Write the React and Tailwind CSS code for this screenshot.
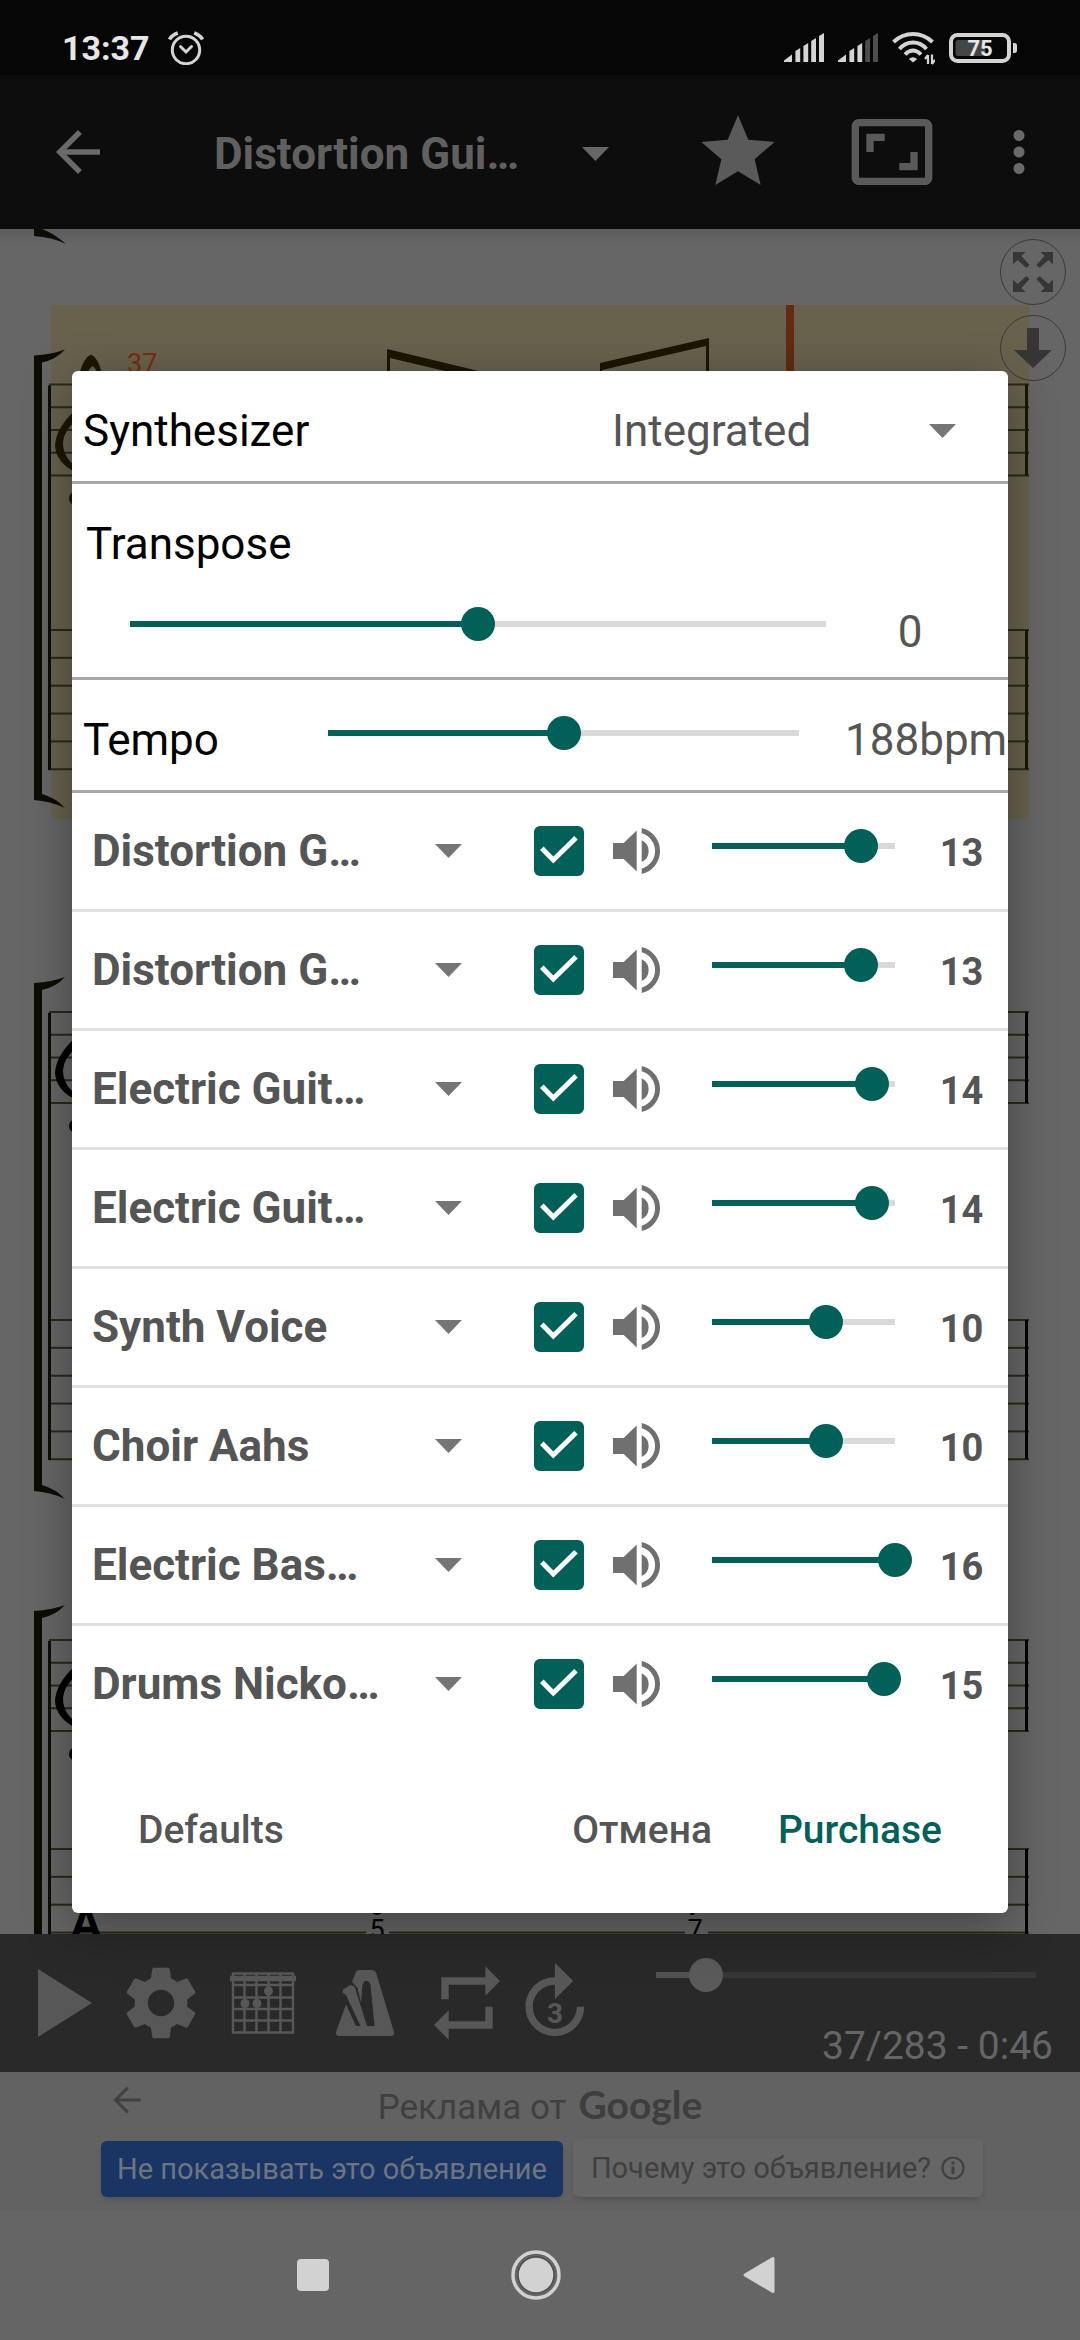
import { useState } from "react";
import { MdArrowBack, MdAspectRatio, MdMoreVert, MdRepeat, MdSettings, MdStar } from "react-icons/md";

const TRACKS = [
  { name: "Distortion G…", volume: 13 },
  { name: "Distortion G…", volume: 13 },
  { name: "Electric Guit…", volume: 14 },
  { name: "Electric Guit…", volume: 14 },
  { name: "Synth Voice", volume: 10 },
  { name: "Choir Aahs", volume: 10 },
  { name: "Electric Bas…", volume: 16 },
  { name: "Drums Nicko…", volume: 15 },
];

function Slider({ label, min = 0, max, value, onChange, dark = false }) {
  const percent = ((value - min) / (max - min)) * 100;
  return (
    <div className="relative flex h-[34px] items-center">
      <div className={`h-1.5 w-full ${dark ? "bg-[#373737]" : "bg-[#d9d9d9]"}`}>
        <div className={`h-full ${dark ? "bg-[#515151]" : "bg-[#016057]"}`} style={{ width: `${percent}%` }} />
      </div>
      <input
        type="range"
        aria-label={label}
        min={min}
        max={max}
        value={value}
        onChange={(e) => onChange(Number(e.target.value))}
        className={`absolute -inset-x-[17px] inset-y-0 m-0 h-[34px] appearance-none bg-transparent [&::-webkit-slider-thumb]:h-[34px] [&::-webkit-slider-thumb]:w-[34px] [&::-webkit-slider-thumb]:appearance-none [&::-webkit-slider-thumb]:rounded-full ${
          dark ? "[&::-webkit-slider-thumb]:bg-[#5a5a5a]" : "[&::-webkit-slider-thumb]:bg-[#016057]"
        }`}
      />
    </div>
  );
}

function Dropdown({ id, label, value, className = "", caret = "text-[#757575]" }) {
  return (
    <div className="grid w-full items-center">
      <select
        id={id}
        aria-label={label}
        defaultValue={value}
        className={`w-full appearance-none bg-transparent text-[44px] leading-[52px] outline-none [grid-area:1/1] ${className}`}
      >
        <option className="text-black">{value}</option>
      </select>
      <svg
        viewBox="0 0 27 14"
        className={`pointer-events-none h-3.5 w-[27px] justify-self-end [grid-area:1/1] ${caret}`}
        fill="currentColor"
        aria-hidden="true"
      >
        <path d="M0 0h27L13.5 14z" />
      </svg>
    </div>
  );
}

function AlarmIcon() {
  return (
    <svg viewBox="0 0 36 34" className="h-[34px] w-9" fill="none" stroke="#d4d4d4" strokeWidth="3" aria-hidden="true">
      <circle cx="18" cy="19" r="13.7" />
      <path d="M1.5 8.5Q4 4 9.8 2M34.5 8.5Q32 4 26.2 2" strokeWidth="3.6" />
      <path d="M12.5 15.5 18 21l5.5-5.5" strokeLinecap="round" />
    </svg>
  );
}

function SignalIcon({ dim = 0 }) {
  const bars = ["M0 27.5 8 21.5V29H0z", "M11.4 18l4.8-3v14h-4.8z", "M19.4 13l4.8-3v19h-4.8z", "M27.2 8 32 5v24h-4.8z", "M35 3l5-3v29h-5z"];
  return (
    <svg viewBox="0 0 40 30" className="h-[30px] w-10" aria-hidden="true">
      {bars.map((d, i) => (
        <path key={d} d={d} fill={i >= bars.length - dim ? "#4d4d4d" : "#d4d4d4"} />
      ))}
    </svg>
  );
}

function WifiIcon() {
  return (
    <svg viewBox="0 0 43 34" className="h-[34px] w-[43px]" fill="none" stroke="#d4d4d4" strokeWidth="3.8" aria-hidden="true">
      <path d="M1.5 11Q10 3 21 3t19.5 8" />
      <path d="M7.5 18Q13 11.5 21 11.5T34.5 18" />
      <path d="M13 23.5Q17 19.5 21 19.5t8 4" />
      <path d="M16.8 28Q21 24.5 25.2 28L21 31.5z" fill="#d4d4d4" stroke="none" />
      <path d="M36 33V24m0 0-3 4M40 23.5V33m0 0 3-4" strokeWidth="2.2" />
    </svg>
  );
}

function BatteryIcon() {
  return (
    <svg viewBox="0 0 68 30" className="h-[30px] w-[68px]" aria-hidden="true">
      <rect x="2" y="2" width="58" height="26" rx="6.5" fill="none" stroke="#d4d4d4" strokeWidth="4" />
      <rect x="6.5" y="7" width="30" height="16" rx="2.5" fill="#454545" />
      <path d="M64 10h1.5q2.5 0 2.5 3v4q0 3-2.5 3H64z" fill="#d4d4d4" />
      <text x="31" y="23" textAnchor="middle" fill="#e6e6e6" className="text-[22px] font-bold">
        75
      </text>
    </svg>
  );
}

function SpeakerIcon() {
  return (
    <svg viewBox="0 0 47 46" className="h-[46px] w-[47px]" fill="#707070" aria-hidden="true">
      <path d="M0 15h10.7L23.7 2.5v41L10.7 31H0z" />
      <path d="M28.7 12.3a12 12 0 0 1 0 21.7z" />
      <path d="M28.7 0a23.6 23.6 0 0 1 0 46v-5.3a18.4 18.4 0 0 0 0-35.4z" />
    </svg>
  );
}

function FretboardIcon() {
  return (
    <svg viewBox="0 0 66 62" className="h-[62px] w-[66px]" fill="none" stroke="currentColor" strokeWidth="2.4" aria-hidden="true">
      <path d="M3 1.5h60v59H3zM14.5 2v58M26.5 2v58M38.5 2v58M50.5 2v58M3 13h60M3 25.5h60M3 37h60M3 48.5h60" />
      <path d="M0 6.500h66" strokeWidth="5.5" />
      <g fill="currentColor" stroke="none">
        <circle cx="38.5" cy="19" r="4.5" />
        <circle cx="15" cy="31.5" r="4.5" />
        <circle cx="27" cy="31.5" r="4.5" />
      </g>
    </svg>
  );
}

function MetronomeIcon() {
  return (
    <svg viewBox="0 0 58 66" className="h-[66px] w-[58px]" fill="currentColor" aria-hidden="true">
      <path d="M20 2Q21 0 23 0H36.5Q39 0 40 2.500L58 62q.5 4-3 4H3q-3.500 0-3-4L10 34.5 20 56h4.500L10 25 6.500 22.500 7 19.500 14.500 15l4 1.500 2 6L31 56h7.500L34.500 15Q33 10 28.500 11L26.500 15 25 33 21.500 18 16 12z" />
    </svg>
  );
}

function SkipThreeIcon() {
  return (
    <svg viewBox="0 0 88 88" className="h-[88px] w-[88px]" fill="currentColor" aria-hidden="true">
      <path
        transform="scale(3.667)"
        d="M17.95 13c0 3.31-2.69 6-6 6s-6-2.69-6-6 2.69-6 6-6v4l5-5-5-5v4c-4.42 0-8 3.58-8 8s3.58 8 8 8 8-3.58 8-8h-2z"
      />
      <text x="44" y="64" textAnchor="middle" className="text-[28px] font-bold">
        3
      </text>
    </svg>
  );
}

function StaffLines({ top, gap, count }) {
  return Array.from({ length: count }, (_, i) => (
    <rect key={i} x="49" y={top + i * gap - 1} width="980" height="2" />
  ));
}

function ScoreSystem({ staff, tab, bracketEnd, ink }) {
  const tabEnd = tab + 139;
  return (
    <g>
      <g fill="#2b2918">
        <StaffLines top={staff} gap={22.75} count={5} />
        <StaffLines top={tab} gap={27.85} count={6} />
      </g>
      <path
        fill="#0d0c05"
        d={`M34 ${staff - 29}Q52 ${staff - 30} 65 ${staff - 35}Q56 ${staff - 25} 42 ${staff - 22}V${bracketEnd - 6}Q56 ${bracketEnd - 2} 65 ${bracketEnd + 8}Q50 ${bracketEnd + 1} 34 ${bracketEnd}z`}
      />
      <rect x="48" y={staff + 1} width="3" height={tabEnd - staff} fill="#0d0c05" />
      <g fill={ink}>
        <rect x="1025" y={staff} width="3" height="91" />
        <rect x="1025" y={tab} width="3" height="139" />
        <path
          d={`M80 ${staff - 13}Q84 ${staff - 27} 91 ${staff - 30}Q98 ${staff - 27} 102 ${staff - 11}L98 ${staff - 9}Q95 ${staff - 19} 92 ${staff - 18}Q88 ${staff - 15} 87 ${staff - 9}z`}
        />
        <path
          d={`M76 ${staff + 25}Q56 ${staff + 43} 55 ${staff + 61}Q56 ${staff + 78} 76 ${staff + 88}V${staff + 82}Q63 ${staff + 73} 63 ${staff + 58}Q64 ${staff + 46} 76 ${staff + 36}z`}
        />
        <circle cx="76" cy={staff + 114} r="7" />
      </g>
    </g>
  );
}

function Score() {
  return (
    <svg viewBox="0 229 1080 1705" className="block w-full" role="img" aria-label="Score">
      <defs>
        <linearGradient id="barShade" x1="0" x2="0" y1="0" y2="1">
          <stop offset="0" stopColor="#000" stopOpacity="0.1" />
          <stop offset="1" stopColor="#000" stopOpacity="0" />
        </linearGradient>
      </defs>
      <rect y="229" width="1080" height="1705" fill="#666" />
      <rect x="51" y="305" width="978" height="514" fill="#68624d" />
      <rect y="229" width="1080" height="16" fill="url(#barShade)" />
      <path d="M34 229h8q13 5 24 15-14-7-32-8z" fill="#0d0c05" />
      <ScoreSystem staff={384.5} tab={630} bracketEnd={800} ink="#1c1700" />
      <ScoreSystem staff={1012} tab={1320} bracketEnd={1491} ink="#000" />
      <ScoreSystem staff={1640} tab={1849} bracketEnd={2020} ink="#000" />
      <text x="127" y="373" fill="#7b2c12" className="text-[27px]">
        37
      </text>
      <path
        fill="#1c1500"
        d="M387 349l100 24v8l-97-23v25h-3zM600 363l109-25v45h-3v-37l-104 24v13h-2z"
      />
      <rect x="786" y="305" width="8" height="514" fill="#622b12" />
      <g fill="#666">
        <rect x="366" y="1890" width="23" height="44" />
        <rect x="685" y="1890" width="23" height="44" />
      </g>
      <path d="M371 1912q6 6 12 0zM691 1912h4l-1 3h-4z" />
      <g textAnchor="middle">
        <text x="86" y="1939" className="text-[47px] font-bold">A</text>
        <text x="377" y="1939" className="text-[27px]">5</text>
        <text x="695" y="1939" className="text-[27px]">7</text>
      </g>
    </svg>
  );
}

function StatusBar() {
  return (
    <div className="flex h-[75px] items-center bg-[#060606] pt-5 pr-[63px] pl-[62px]">
      <span className="text-[34px] leading-10 font-bold text-[#e6e6e6]">13:37</span>
      <div className="ml-[18px]">
        <AlarmIcon />
      </div>
      <div className="ml-auto flex items-center gap-3.5">
        <SignalIcon />
        <SignalIcon dim={2} />
        <WifiIcon />
        <BatteryIcon />
      </div>
    </div>
  );
}

function AppBar() {
  return (
    <header className="flex h-[154px] items-center bg-[#0d0d0d] pr-7 pl-[45px] text-[#5a5a5a]">
      <button aria-label="Back" className="text-[66px] text-[#6a6a6a]">
        <MdArrowBack />
      </button>
      <div className="ml-[103px] flex-1 pt-1">
        <Dropdown label="Track" value="Distortion Gui…" className="font-bold text-[#606060]" caret="text-[#666]" />
      </div>
      <button aria-label="Favorite" className="ml-[85px] text-[88px]">
        <MdStar />
      </button>
      <button aria-label="Fit to screen" className="ml-[66px] text-[88px]">
        <MdAspectRatio />
      </button>
      <button aria-label="More options" className="ml-[50px] text-[66px] text-[#6a6a6a]">
        <MdMoreVert />
      </button>
    </header>
  );
}

function ScoreButtons() {
  const arrow = "M0 0h12.5l-4 4 8 9-3 3-9-8L0 12.5z";
  return (
    <div className="absolute top-2.5 right-3.5 flex flex-col gap-2.5 text-[#363636]">
      <button aria-label="Expand" className="grid h-[66px] w-[66px] place-items-center rounded-full border border-[#3a3a3a]">
        <svg viewBox="0 0 40 40" className="h-10 w-10" fill="currentColor" aria-hidden="true">
          <path d={arrow} />
          <path d={arrow} transform="translate(40 0) scale(-1 1)" />
          <path d={arrow} transform="translate(0 40) scale(1 -1)" />
          <path d={arrow} transform="translate(40 40) scale(-1 -1)" />
        </svg>
      </button>
      <button aria-label="Scroll down" className="grid h-[66px] w-[66px] place-items-center rounded-full border border-[#3a3a3a]">
        <svg viewBox="0 0 38 40" className="h-10 w-[38px]" fill="currentColor" aria-hidden="true">
          <path d="M13 0h12v22h13L19 40 0 22h13z" />
        </svg>
      </button>
    </div>
  );
}

function Player() {
  const [position, setPosition] = useState(37);
  const cell = "grid h-[88px] w-[88px] place-items-center text-[88px]";
  return (
    <div className="flex h-[138px] bg-[#292929] pl-[21px] text-[#575757]">
      <div className="flex items-center gap-3.5">
        <div className="flex gap-2">
          <button aria-label="Play" className={cell}>
            <svg viewBox="0 0 54 68" className="h-[68px] w-[54px]" fill="currentColor" aria-hidden="true">
              <path d="M0 0l54 34L0 68z" />
            </svg>
          </button>
          <button aria-label="Settings" className={cell}>
            <MdSettings />
          </button>
        </div>
        <button aria-label="Fretboard" className={cell}>
          <FretboardIcon />
        </button>
        <button aria-label="Metronome" className={cell}>
          <MetronomeIcon />
        </button>
        <div className="flex">
          <button aria-label="Loop" className={cell}>
            <MdRepeat />
          </button>
          <button aria-label="Count in" className={cell}>
            <SkipThreeIcon />
          </button>
        </div>
      </div>
      <div className="ml-[57px] flex flex-1 flex-col gap-8 pt-6">
        <div className="mr-11">
          <Slider label="Position" max={283} value={position} onChange={setPosition} dark />
        </div>
        <p className="mr-[27px] text-right text-[39px] leading-11 whitespace-nowrap text-[#656565]">{position}/283 - 0:46</p>
      </div>
    </div>
  );
}

function AdBanner() {
  return (
    <div className="flex h-[138px] flex-col bg-[#626262] px-[101px] text-[#404040]">
      <div className="flex h-[67px] items-center">
        <button aria-label="Back" className="ml-3">
          <svg viewBox="0 0 28 28" className="mb-3 h-7 w-7" fill="none" stroke="currentColor" strokeWidth="3" strokeLinecap="round" aria-hidden="true">
            <path d="M26.500 14H3M14 2.500 2.500 14 14 25.500" />
          </svg>
        </button>
        <p className="mr-10 flex flex-1 items-baseline justify-center gap-3 text-[35px] leading-10">
          Реклама от
          <span className="font-[Lato] text-[39px] font-bold text-[#3e3e3e]">Google</span>
        </p>
      </div>
      <div className="flex items-end gap-2.5 text-[29px] leading-8">
        <button className="h-14 rounded-md bg-[#1a3564] px-4 whitespace-nowrap text-[#6d7580] shadow-md">
          Не показывать это объявление
        </button>
        <button className="flex h-[58px] items-center gap-2.5 rounded-md bg-[#666] px-[18px] whitespace-nowrap shadow-md">
          Почему это объявление?
          <svg viewBox="0 0 24 24" className="h-6 w-6" fill="none" stroke="currentColor" strokeWidth="2.2" aria-hidden="true">
            <circle cx="12" cy="12" r="10.5" />
            <path d="M12 10.500V18" strokeWidth="3" />
            <path d="M12 5.500v3" strokeWidth="3" />
          </svg>
        </button>
      </div>
    </div>
  );
}

function NavBar() {
  return (
    <nav className="flex h-[130px] items-center justify-center gap-[182px] bg-[#656565] pr-2 text-[#d2d2d2]">
      <button aria-label="Recent apps" className="h-8 w-8 rounded-sm bg-current" />
      <button aria-label="Home">
        <svg viewBox="0 0 50 50" className="h-[50px] w-[50px]" aria-hidden="true">
          <circle cx="25" cy="25" r="23" fill="none" stroke="currentColor" strokeWidth="3.5" />
          <circle cx="25" cy="25" r="18" fill="currentColor" stroke="#505050" strokeWidth="1.5" />
        </svg>
      </button>
      <button aria-label="Back">
        <svg viewBox="0 0 32 38" className="h-[38px] w-8" fill="currentColor" stroke="currentColor" strokeWidth="3" strokeLinejoin="round" aria-hidden="true">
          <path d="M2 19 30 2.500v33z" />
        </svg>
      </button>
    </nav>
  );
}

function TrackRow({ track, index }) {
  const [on, setOn] = useState(true);
  const [volume, setVolume] = useState(track.volume);
  return (
    <li className="flex h-[119px] items-center border-b-3 border-[#e0e0e0] pr-5 pl-5 last:h-[116px] last:border-b-0">
      <div className="flex-1">
        <Dropdown label={`Instrument ${index + 1}`} value={track.name} className="font-bold text-[#555]" />
      </div>
      <div className="ml-[72px] grid">
        <input
          type="checkbox"
          aria-label={`Enable track ${index + 1}`}
          checked={on}
          onChange={(e) => setOn(e.target.checked)}
          className="h-[50px] w-[50px] appearance-none rounded-md border-4 border-[#707070] [grid-area:1/1] checked:border-[#016057] checked:bg-[#016057]"
        />
        {on && (
          <svg viewBox="0 0 50 50" className="pointer-events-none h-[50px] w-[50px] [grid-area:1/1]" fill="none" stroke="#fff" strokeWidth="5" aria-hidden="true">
            <path d="M7.8 22.3 19.3 34 42 11.7" />
          </svg>
        )}
      </div>
      <button aria-label={`Mute track ${index + 1}`} className="ml-[29px]">
        <SpeakerIcon />
      </button>
      <div className="ml-[52px] w-[183px] pb-2.5">
        <Slider label={`Volume ${index + 1}`} max={16} value={volume} onChange={setVolume} />
      </div>
      <output className="ml-10 w-[53px] pt-1 text-center text-[38px] leading-11 font-bold text-[#555]">{volume}</output>
    </li>
  );
}

function MixerDialog() {
  const [transpose, setTranspose] = useState(0);
  const [tempo, setTempo] = useState(188);
  return (
    <div role="dialog" aria-label="Mixer" className="w-full rounded-md bg-white text-[44px] leading-[52px] shadow-[0_12px_48px_rgba(0,0,0,0.36)]">
      <div className="flex h-[113px] items-center border-b-3 border-[#a8a8a8] pt-2.5 pr-[52px] pl-[11px]">
        <label htmlFor="synthesizer">Synthesizer</label>
        <div className="ml-auto w-[344px]">
          <Dropdown id="synthesizer" label="Synthesizer" value="Integrated" className="text-[#555]" />
        </div>
      </div>
      <div className="flex h-[196px] flex-col border-b-3 border-[#a8a8a8] pt-[34px] pl-3.5">
        <span>Transpose</span>
        <div className="flex flex-1 items-center pt-4">
          <div className="ml-11 flex-1 pb-4">
            <Slider label="Transpose" min={-12} max={12} value={transpose} onChange={setTranspose} />
          </div>
          <output className="w-[182px] pr-3.5 text-center text-[#555]">{transpose}</output>
        </div>
      </div>
      <div className="flex h-[113px] items-center border-b-3 border-[#a8a8a8] pt-2.5 pl-[11px]">
        <span className="w-[245px]">Tempo</span>
        <div className="mr-[46px] flex-1 pb-3.5">
          <Slider label="Tempo" min={0} max={376} value={tempo} onChange={setTempo} />
        </div>
        <output className="w-[163px] whitespace-nowrap text-[#555]">{tempo}bpm</output>
      </div>
      <ul>
        {TRACKS.map((track, i) => (
          <TrackRow key={i} track={track} index={i} />
        ))}
      </ul>
      <div className="flex h-[171px] items-center pt-1 pr-[66px] pl-[66px] text-[39px] font-medium text-[#555]">
        <button>Defaults</button>
        <button className="ml-auto">Отмена</button>
        <button className="ml-[66px] text-[#016057]">Purchase</button>
      </div>
    </div>
  );
}

export default function App() {
  return (
    <div className="relative flex min-h-screen flex-col overflow-hidden bg-[#656565] font-[Roboto,sans-serif]">
      <StatusBar />
      <AppBar />
      <main className="relative">
        <Score />
        <ScoreButtons />
      </main>
      <Player />
      <AdBanner />
      <NavBar />
      <div className="absolute inset-0 flex items-center justify-center px-[72px] pb-14">
        <MixerDialog />
      </div>
    </div>
  );
}
